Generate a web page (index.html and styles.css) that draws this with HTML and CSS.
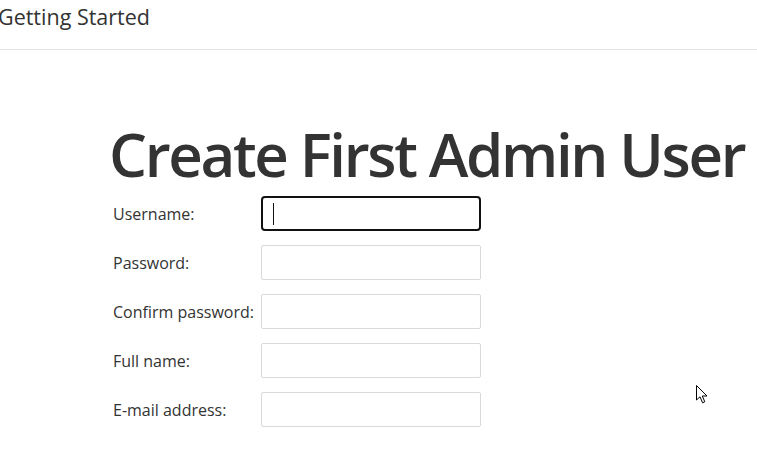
FILE: index.html
```html
<!DOCTYPE html>
<html>
<head>
<meta charset="utf-8">
<link rel="stylesheet" href="styles.css">
</head>
<body>
<header class="top-bar">
  <span class="top-title">Getting Started</span>
</header>
<main class="content">
  <h1 class="page-title">Create First Admin User</h1>
  <form class="admin-form">
    <div class="form-row">
      <label class="form-label">Username:</label>
      <div class="field field-focused"><span class="caret"></span></div>
    </div>
    <div class="form-row">
      <label class="form-label">Password:</label>
      <div class="field"></div>
    </div>
    <div class="form-row">
      <label class="form-label">Confirm password:</label>
      <div class="field"></div>
    </div>
    <div class="form-row">
      <label class="form-label">Full name:</label>
      <div class="field"></div>
    </div>
    <div class="form-row">
      <label class="form-label">E-mail address:</label>
      <div class="field"></div>
    </div>
  </form>
</main>
<svg class="mouse-pointer" width="14" height="22" viewBox="0 0 14 22">
  <path d="M1.5 1.5 L1.5 16 L5 12.8 L7.6 18.8 L9.8 17.8 L7.3 12 L12 12 Z" fill="#fff" stroke="#000" stroke-width="1" stroke-linejoin="miter"/>
</svg>
</body>
</html>
```
FILE: styles.css
```css
html, body {
  margin: 0;
  padding: 0;
  background: #fff;
  font-family: "Open Sans", "Noto Sans", sans-serif;
  color: #333;
  overflow: hidden;
}

body {
  position: relative;
  width: 757px;
  height: 472px;
}

.top-bar {
  height: 49px;
  border-bottom: 1px solid #e5e5e5;
  display: flex;
  align-items: flex-start;
}

.top-title {
  margin-left: -2px;
  margin-top: 3px;
  font-size: 21.5px;
  line-height: 28px;
  font-weight: 500;
  color: #333;
  white-space: nowrap;
}

.content {
  padding-left: 109px;
}

.page-title {
  margin: 71px 0 0 0;
  font-size: 60px;
  line-height: 66px;
  font-weight: 600;
  letter-spacing: -2.35px;
  color: #333;
  white-space: nowrap;
}

.admin-form {
  margin-top: 9px;
  padding-left: 4px;
  display: flex;
  flex-direction: column;
  gap: 14px;
}

.form-row {
  display: flex;
  align-items: center;
  height: 35px;
}

.form-label {
  width: 148px;
  font-size: 16px;
  color: #333;
  white-space: nowrap;
}

.field {
  box-sizing: border-box;
  width: 220px;
  height: 35px;
  border: 1px solid #d9d9d9;
  border-radius: 2px;
  background: #fff;
  display: flex;
  align-items: center;
}

.field-focused {
  border: 2px solid #111;
  border-radius: 4px;
}

.caret {
  display: block;
  width: 1px;
  height: 22px;
  margin-left: 10px;
  background: #111;
}

.mouse-pointer {
  position: absolute;
  left: 695px;
  top: 384px;
}
```
